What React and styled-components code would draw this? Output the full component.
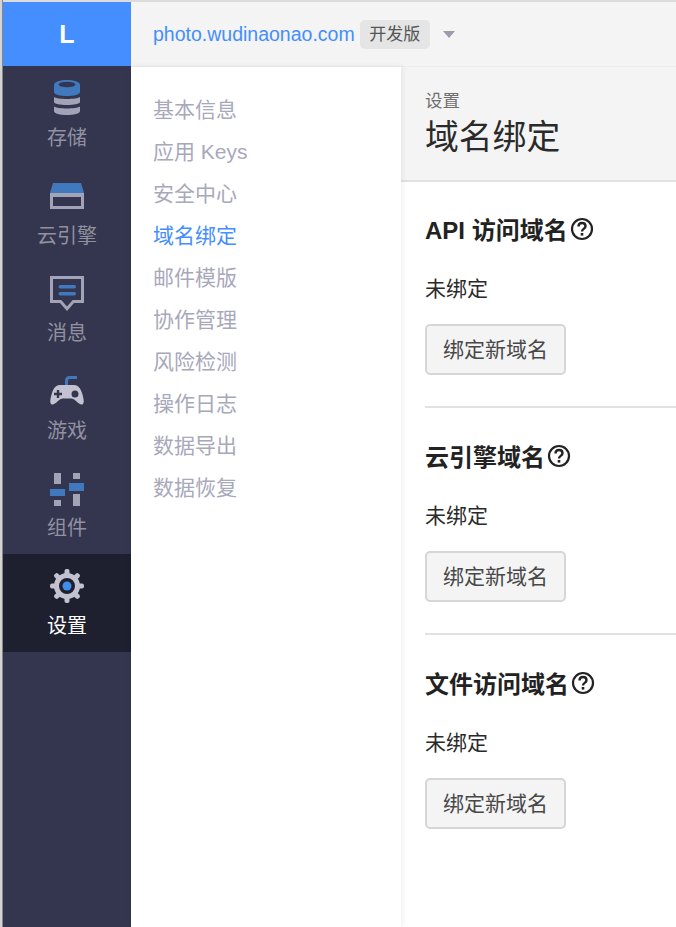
import React from "react";
import styled, { createGlobalStyle } from "styled-components";

const NAV_ITEMS = [
  { label: "存储", icon: <StorageIcon />, top: 5 },
  { label: "云引擎", icon: <EngineIcon />, top: 7 },
  { label: "消息", icon: <MessageIcon />, top: 7 },
  { label: "游戏", icon: <GameIcon />, top: 5 },
  { label: "组件", icon: <ComponentIcon />, top: 9 },
  { label: "设置", icon: <SettingIcon />, top: 7, active: true },
];

const MENU_ITEMS = [
  "基本信息",
  "应用 Keys",
  "安全中心",
  "域名绑定",
  "邮件模版",
  "协作管理",
  "风险检测",
  "操作日志",
  "数据导出",
  "数据恢复",
];

const SECTIONS = ["API 访问域名", "云引擎域名", "文件访问域名"];

function StorageIcon() {
  return (
    <svg width="26" height="35" viewBox="0 0 26 35">
      <path d="M0 17c3 2.600 23 2.600 26 0v5c0 4-26 4-26 0z" fill="#a3a3b8" />
      <path d="M0 26.500c3 2.600 23 2.600 26 0V31c0 5.300-26 5.300-26 0z" fill="#a3a3b8" />
      <path d="M0 5c0-6.600 26-6.600 26 0v7c0 5.300-26 5.300-26 0z" fill="#4079bd" />
      <ellipse cx="13" cy="4.500" rx="8.500" ry="2.800" fill="#343651" />
    </svg>
  );
}

function EngineIcon() {
  return (
    <svg width="34" height="26" viewBox="0 0 34 26">
      <path d="M3 0h28l3 10H0z" fill="#4079bd" />
      <path d="M0 10h34v16H0zM3 14v9h28v-9z" fill="#a3a3b8" fillRule="evenodd" />
    </svg>
  );
}

function MessageIcon() {
  return (
    <svg width="34" height="35" viewBox="0 0 34 35">
      <path
        d="M0 0h34v27H24l-7 8-7-8H0zM3 3v21h8.300L17 30.500 22.700 24H31V3z"
        fill="#a3a3b8"
        fillRule="evenodd"
      />
      <rect x="8.500" y="9" width="17.500" height="3.500" rx="1.700" fill="#4079bd" />
      <rect x="8.500" y="16" width="17.500" height="3.500" rx="1.700" fill="#4079bd" />
    </svg>
  );
}

function GameIcon() {
  return (
    <svg width="34" height="30" viewBox="0 0 34 30">
      <path
        d="M16.500 10V6c0-2.400 1.500-3.500 3.500-3.500h7"
        fill="none"
        stroke="#4079bd"
        strokeWidth="3"
      />
      <path
        fillRule="evenodd"
        fill="#c2c2d0"
        d="M10 10H24C28 10 30.500 13 32 18 33.500 23 34.500 27 33 29 31.500 30.500 29 29 26 26 24.500 24.500 23 23.500 21 23.500H13C11 23.500 9.500 24.500 8 26 5 29 2.500 30.500 1 29-.5 27 .5 23 2 18 3.500 13 6 10 10 10zM6.800 15v2.800H4v2.400h2.800V23h2.400v-2.800H12v-2.400H9.200V15zM25 15.500a3.500 3.500 0 1 0 0 7 3.500 3.500 0 0 0 0-7z"
      />
    </svg>
  );
}

function ComponentIcon() {
  return (
    <svg width="34" height="33" viewBox="0 0 34 33">
      <path d="M4 0h7v11H4zM4 27h7v6H4zM23 0h7v6h-7zM23 21h7v12h-7z" fill="#a3a3b8" />
      <path d="M0 16h15v7H0zM19 10h15v8H19z" fill="#4079bd" />
    </svg>
  );
}

function SettingIcon() {
  const teeth = [0, 45, 90, 135, 180, 225, 270, 315];
  return (
    <svg width="34" height="34" viewBox="0 0 34 34">
      {teeth.map((a) => (
        <rect
          key={a}
          x="14.500"
          y="0"
          width="5"
          height="7"
          rx="2"
          fill="#c2c2d0"
          transform={`rotate(${a} 17 17)`}
        />
      ))}
      <circle cx="17" cy="17" r="10.500" fill="none" stroke="#c2c2d0" strokeWidth="5" />
      <circle cx="17" cy="17" r="4.500" fill="#3f8ee8" />
    </svg>
  );
}

function HelpIcon() {
  return (
    <HelpSvg width="24" height="24" viewBox="0 0 24 24">
      <circle cx="12" cy="12" r="10" fill="none" stroke="#222" strokeWidth="2.200" />
      <path
        d="M8.500 9.500c0-2.200 1.500-3.500 3.500-3.500s3.500 1.200 3.500 3.200c0 2.800-3.500 2.600-3.500 5.300"
        fill="none"
        stroke="#222"
        strokeWidth="2.400"
      />
      <rect x="10.700" y="16" width="2.600" height="2.600" fill="#222" />
    </HelpSvg>
  );
}

export default function App() {
  return (
    <>
      <GlobalStyle />
      <Page>
        <EdgeStrip />
        <LeftBar>
          <Logo>L</Logo>
          {NAV_ITEMS.map((item) => (
            <NavItem key={item.label} $active={item.active}>
              <NavIcon $top={item.top}>{item.icon}</NavIcon>
              <NavLabel>{item.label}</NavLabel>
            </NavItem>
          ))}
        </LeftBar>
        <MainArea>
          <TopBar>
            <AppName>photo.wudinaonao.com</AppName>
            <Badge>开发版</Badge>
            <Caret />
          </TopBar>
          <ContentRow>
            <SideMenu>
              {MENU_ITEMS.map((item) => (
                <MenuItem key={item} $active={item === "域名绑定"}>
                  {item}
                </MenuItem>
              ))}
            </SideMenu>
            <Content>
              <PageHead>
                <Crumb>设置</Crumb>
                <PageTitle>域名绑定</PageTitle>
              </PageHead>
              <SectionList>
                {SECTIONS.map((title, i) => (
                  <Section key={title} $last={i === SECTIONS.length - 1}>
                    <SectionTitle>
                      {title}
                      <HelpIcon />
                    </SectionTitle>
                    <Status>未绑定</Status>
                    <BindButton>绑定新域名</BindButton>
                  </Section>
                ))}
              </SectionList>
            </Content>
          </ContentRow>
        </MainArea>
      </Page>
    </>
  );
}

const GlobalStyle = createGlobalStyle`
  html, body {
    margin: 0;
    height: 100%;
    overflow: hidden;
    background: #fff;
  }
  #root {
    height: 100%;
  }
  * {
    box-sizing: border-box;
  }
`;

const Page = styled.div`
  display: flex;
  width: 676px;
  height: 927px;
  padding-top: 2px;
  background-color: #dcdcdc;
  font-family: "Liberation Sans", "Noto Sans CJK SC", sans-serif;
`;

const EdgeStrip = styled.div`
  flex: none;
  width: 3px;
  margin-top: -2px;
  background-color: #d4d4d4;
  border-right: 1px solid #858585;
`;

const LeftBar = styled.div`
  flex: none;
  width: 128px;
  background-color: #343650;
`;

const Logo = styled.div`
  display: flex;
  justify-content: center;
  align-items: center;
  height: 64px;
  background-color: #448eff;
  color: #fff;
  font-size: 25px;
  font-weight: bold;
`;

const NavItem = styled.div`
  display: flex;
  flex-direction: column;
  align-items: center;
  height: 97.6px;
  background-color: ${(p) => (p.$active ? "#1f202f" : "transparent")};
  color: ${(p) => (p.$active ? "#fff" : "#91919f")};
`;

const NavIcon = styled.div`
  display: flex;
  justify-content: center;
  align-items: center;
  height: 58px;
  padding-top: ${(p) => p.$top}px;
`;

const NavLabel = styled.div`
  font-size: 20px;
  line-height: 28px;
`;

const MainArea = styled.div`
  flex: 1;
  min-width: 0;
  display: flex;
  flex-direction: column;
  background-color: #fff;
`;

const TopBar = styled.div`
  flex: none;
  display: flex;
  align-items: center;
  height: 65px;
  padding-left: 22px;
  background-color: #f4f4f4;
  border-bottom: 1px solid #ececec;
`;

const AppName = styled.div`
  color: #448eff;
  font-size: 19.5px;
`;

const Badge = styled.span`
  margin-left: 5px;
  padding: 0 9.500px;
  height: 29px;
  line-height: 29px;
  border-radius: 5px;
  background-color: #e5e5e5;
  color: #555;
  font-size: 17px;
`;

const Caret = styled.span`
  margin-left: 13px;
  border-top: 7px solid #9c9cad;
  border-left: 6px solid transparent;
  border-right: 6px solid transparent;
`;

const ContentRow = styled.div`
  flex: 1;
  display: flex;
  min-height: 0;
`;

const SideMenu = styled.div`
  flex: none;
  width: 270px;
  padding: 22px 22px 0;
  background-color: #fff;
  box-shadow: 1px 0 6px rgba(0, 0, 0, 0.08);
  z-index: 1;
`;

const MenuItem = styled.div`
  height: 42px;
  line-height: 42px;
  font-size: 21px;
  color: ${(p) => (p.$active ? "#448eff" : "#a8a8bb")};
`;

const Content = styled.div`
  flex: 1;
  min-width: 0;
  overflow: hidden;
`;

const PageHead = styled.div`
  height: 115px;
  padding: 24px 24px 0;
  background-color: #f4f4f4;
  border-bottom: 2px solid #e2e2e2;
`;

const Crumb = styled.div`
  font-size: 17.5px;
  line-height: 20px;
  color: #707070;
`;

const PageTitle = styled.div`
  margin-top: 4px;
  font-size: 33.800px;
  line-height: 44px;
  color: #2a2a2a;
`;

const SectionList = styled.div`
  margin-top: -1px;
`;

const Section = styled.div`
  margin-left: 24px;
  height: 227px;
  padding-top: 29px;
  border-bottom: ${(p) => (p.$last ? "none" : "2px solid #e2e2e2")};
`;

const SectionTitle = styled.div`
  display: flex;
  align-items: center;
  gap: 2px;
  height: 36px;
  font-size: 24px;
  font-weight: bold;
  color: #222;
`;

const HelpSvg = styled.svg`
  margin-top: 2px;
`;

const Status = styled.div`
  margin-top: 29px;
  font-size: 21px;
  line-height: 28px;
  color: #2a2a2a;
`;

const BindButton = styled.button`
  display: block;
  margin-top: 21px;
  width: 141px;
  height: 51px;
  padding: 0 0 3px;
  border: 2px solid #d6d6d6;
  border-radius: 5px;
  background-color: #f4f4f4;
  color: #484848;
  font-family: inherit;
  font-size: 21px;
`;
